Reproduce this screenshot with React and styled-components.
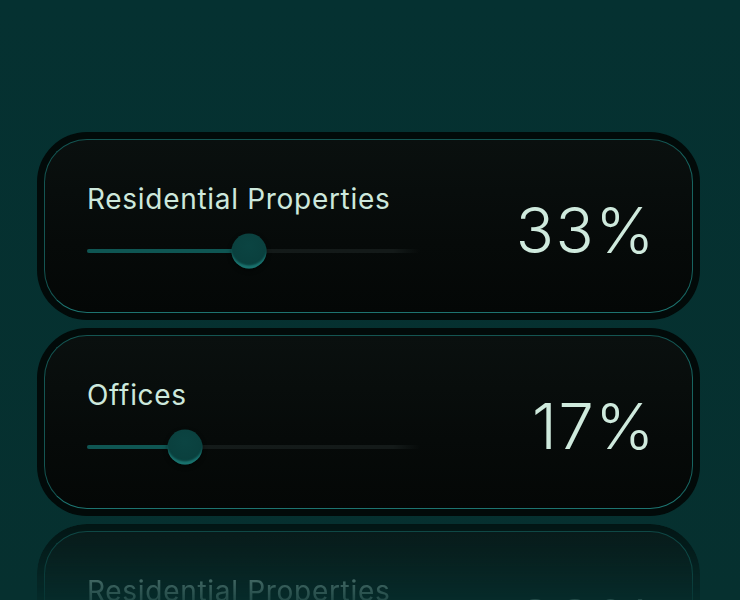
import React from 'react';
import styled, { createGlobalStyle } from 'styled-components';

const GlobalStyle = createGlobalStyle`
    html, body {
        margin: 0;
        padding: 0;
        background: #053131;
        font-family: Inter, "Noto Sans", "Liberation Sans", sans-serif;
    }
`;

const Page = styled.div`
    width: 740px;
    height: 600px;
    overflow: hidden;
    box-sizing: border-box;
    padding: 132px 40px 0 37px;
    background: linear-gradient(180deg, #053131 0%, #06302f 100%);
    display: flex;
    flex-direction: column;
    gap: 8px;
`;

const Ring = styled.div`
    flex: none;
    height: 188px;
    box-sizing: border-box;
    padding: 7px;
    border-radius: 50px;
    background: #020a09;
    ${p => p.faded && `
        -webkit-mask-image: linear-gradient(180deg, rgba(0,0,0,.7) 0px, rgba(0,0,0,.14) 76px);
        mask-image: linear-gradient(180deg, rgba(0,0,0,.7) 0px, rgba(0,0,0,.14) 76px);
    `}
`;

const Body = styled.div`
    height: 100%;
    box-sizing: border-box;
    border-radius: 43px;
    border: 1.5px solid #145552;
    border-bottom-color: #1d7470;
    border-right-color: #176460;
    background: linear-gradient(180deg, #0a100f 0%, #060a09 60%, #040706 100%);
    display: flex;
    align-items: center;
    justify-content: space-between;
    padding: 0 38px 0 42px;
`;

const Left = styled.div`
    display: flex;
    flex-direction: column;
    width: 333px;
    padding-bottom: 16px;
`;

const Label = styled.div`
    color: #cde8dc;
    font-size: 28px;
    font-weight: 400;
    letter-spacing: 0.7px;
    line-height: 32px;
    white-space: nowrap;
`;

const Track = styled.div`
    position: relative;
    margin-top: 34px;
    height: 4px;
    border-radius: 2px;
    background: linear-gradient(90deg, #141b1a 0%, #141a19 92%, rgba(20,26,25,0) 100%);
`;

const Fill = styled.div`
    height: 100%;
    border-radius: 2px;
    background: #0f5653;
`;

const Thumb = styled.div`
    position: absolute;
    top: 50%;
    width: 35px;
    height: 35px;
    border-radius: 50%;
    transform: translate(-50%, -50%);
    background: radial-gradient(circle at 50% 35%, #0b4442 0%, #0a403e 60%, #0a3f3d 100%);
    box-shadow: inset 0 -4px 2px -1px #1a736f, 0 2px 4px rgba(0,0,0,.5);
`;

const Value = styled.div`
    color: #cfeadd;
    font-size: 63px;
    font-weight: 300;
    letter-spacing: 1.6px;
    line-height: 1;
    margin-top: 8px;
    margin-right: -2px;
    white-space: nowrap;
`;

const items = [
    { label: 'Residential Properties', value: '33%', pos: 0.485 },
    { label: 'Offices', value: '17%', pos: 0.293 },
    { label: 'Residential Properties', value: '33%', pos: 0.485, faded: true },
];

function Allocation({ label, value, pos, faded }) {
    return (
        <Ring faded={faded}>
            <Body>
                <Left>
                    <Label>{label}</Label>
                    <Track>
                        <Fill style={{ width: `${pos * 100}%` }} />
                        <Thumb style={{ left: `${pos * 100}%` }} />
                    </Track>
                </Left>
                <Value>{value}</Value>
            </Body>
        </Ring>
    );
}

export default function App() {
    return (
        <>
            <GlobalStyle />
            <Page>
                {items.map((it, i) => <Allocation key={i} {...it} />)}
            </Page>
        </>
    );
}
